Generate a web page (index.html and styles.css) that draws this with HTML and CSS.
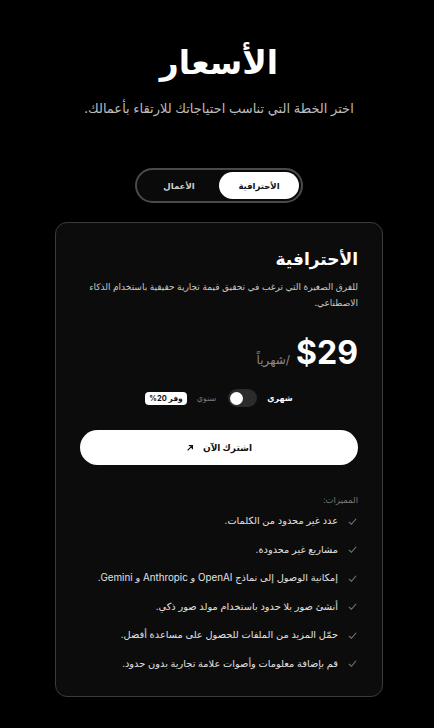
FILE: index.html
```html
<!DOCTYPE html>
<html lang="ar" dir="rtl">
<head>
<meta charset="utf-8">
<link rel="stylesheet" href="styles.css">
</head>
<body>
<main class="page">
  <h1 class="title">الأسعار</h1>
  <p class="subtitle">اختر الخطة التي تناسب احتياجاتك للارتقاء بأعمالك.</p>

  <div class="tabs">
    <button class="tab active">الأحترافية</button>
    <button class="tab">الأعمال</button>
  </div>

  <section class="card">
    <h2 class="plan">الأحترافية</h2>
    <p class="desc">للفرق الصغيرة التي ترغب في تحقيق قيمة تجارية حقيقية باستخدام الذكاء الاصطناعي.</p>

    <div class="price-row">
      <span class="price">$29</span>
      <span class="per">/شهرياً</span>
    </div>

    <div class="billing">
      <span class="bill-on">شهري</span>
      <span class="switch"><span class="knob"></span></span>
      <span class="bill-off">سنوي</span>
      <span class="badge">وفر 20%</span>
    </div>

    <button class="cta">اشترك الآن <svg class="arrow" viewBox="0 0 10 10" width="8" height="8"><path d="M2 8 L8 2 M3.5 2 H8 V6.5" fill="none" stroke="#111" stroke-width="1.5"/></svg></button>

    <p class="feat-title">المميزات:</p>
    <ul class="features">
      <li><svg class="check" viewBox="0 0 12 12" width="11" height="11"><path d="M2 6.5 L4.8 9 L10 3" fill="none" stroke="#7a7a7a" stroke-width="1.1"/></svg><span>عدد غير محدود من الكلمات.</span></li>
      <li><svg class="check" viewBox="0 0 12 12" width="11" height="11"><path d="M2 6.5 L4.8 9 L10 3" fill="none" stroke="#7a7a7a" stroke-width="1.1"/></svg><span>مشاريع غير محدودة.</span></li>
      <li><svg class="check" viewBox="0 0 12 12" width="11" height="11"><path d="M2 6.5 L4.8 9 L10 3" fill="none" stroke="#7a7a7a" stroke-width="1.1"/></svg><span>إمكانية الوصول إلى نماذج OpenAI و Anthropic و Gemini.</span></li>
      <li><svg class="check" viewBox="0 0 12 12" width="11" height="11"><path d="M2 6.5 L4.8 9 L10 3" fill="none" stroke="#7a7a7a" stroke-width="1.1"/></svg><span>أنشئ صور بلا حدود باستخدام مولد صور ذكي.</span></li>
      <li><svg class="check" viewBox="0 0 12 12" width="11" height="11"><path d="M2 6.5 L4.8 9 L10 3" fill="none" stroke="#7a7a7a" stroke-width="1.1"/></svg><span>حمّل المزيد من الملفات للحصول على مساعدة أفضل.</span></li>
      <li><svg class="check" viewBox="0 0 12 12" width="11" height="11"><path d="M2 6.5 L4.8 9 L10 3" fill="none" stroke="#7a7a7a" stroke-width="1.1"/></svg><span>قم بإضافة معلومات وأصوات علامة تجارية بدون حدود.</span></li>
    </ul>
  </section>
</main>
</body>
</html>
```

FILE: styles.css
```css
* { box-sizing: border-box; }
html, body { margin: 0; padding: 0; background: #000; }
body {
  color: #fff;
  font-family: "Inter", "DejaVu Sans", sans-serif;
  direction: rtl;
}
.page {
  display: flex;
  flex-direction: column;
  align-items: center;
  padding: 36px 0 30px 4px;
}
.title {
  margin: 0;
  font-size: 33px;
  font-weight: 700;
  line-height: 52px;
}
.subtitle {
  margin: 10px 0 0;
  font-size: 13px;
  color: #bdbdbd;
  line-height: 20px;
}
.tabs {
  margin-top: 50px;
  width: 168px;
  height: 35px;
  border: 2px solid #4a4a4a;
  border-radius: 18px;
  padding: 2px;
  display: flex;
  background: #0a0a0a;
}
.tab {
  flex: 1;
  border: 0;
  background: transparent;
  color: #cfcfcf;
  font-family: inherit;
  font-size: 8.5px;
  font-weight: 700;
  border-radius: 14px;
  padding: 0;
}
.tab.active { background: #fff; color: #111; }
.card {
  margin-top: 19px;
  width: 328px;
  border: 1px solid #3c3c3c;
  border-radius: 12px;
  background: #0c0c0c;
  padding: 20px 24px 23px;
}
.plan {
  margin: 0;
  font-size: 17px;
  font-weight: 700;
  line-height: 32px;
}
.desc {
  margin: 4px 0 0;
  font-size: 9px;
  line-height: 16px;
  color: #c8c8c8;
}
.price-row {
  margin-top: 20px;
  display: flex;
  align-items: baseline;
  gap: 6px;
  height: 44px;
}
.price {
  font-size: 32px;
  font-weight: 700;
  direction: ltr;
  line-height: 44px;
}
.per { font-size: 12px; color: #8a8a8a; }
.billing {
  margin-top: 14px;
  height: 18px;
  display: flex;
  justify-content: center;
  align-items: center;
  gap: 10px;
  font-size: 8px;
}
.bill-on { color: #fff; font-weight: 700; }
.bill-off { color: #777; }
.switch {
  width: 29px;
  height: 18px;
  border-radius: 9px;
  background: #2b2b2b;
  display: flex;
  align-items: center;
  padding: 0 2px;
  justify-content: flex-end;
  margin-left: 2px;
}
.knob { width: 13px; height: 13px; border-radius: 50%; background: #fff; }
.badge {
  background: #fff;
  color: #111;
  font-size: 7.5px;
  font-weight: 700;
  border-radius: 4px;
  padding: 2px 4px;
}
.cta {
  margin-top: 23px;
  width: 100%;
  height: 35px;
  border: 0;
  border-radius: 18px;
  background: #fff;
  color: #111;
  font-family: inherit;
  font-size: 9px;
  font-weight: 700;
  display: flex;
  align-items: center;
  justify-content: center;
  gap: 9px;
}
.feat-title {
  margin: 28px 0 0;
  font-size: 8.5px;
  line-height: 14px;
  color: #7a7a7a;
}
.features {
  list-style: none;
  margin: 5px 0 0;
  padding: 0;
  display: flex;
  flex-direction: column;
  gap: 10.5px;
}
.features li {
  display: flex;
  align-items: center;
  gap: 9px;
  font-size: 9.8px;
  line-height: 18px;
  color: #e2e2e2;
}
.check { flex: none; }
```
